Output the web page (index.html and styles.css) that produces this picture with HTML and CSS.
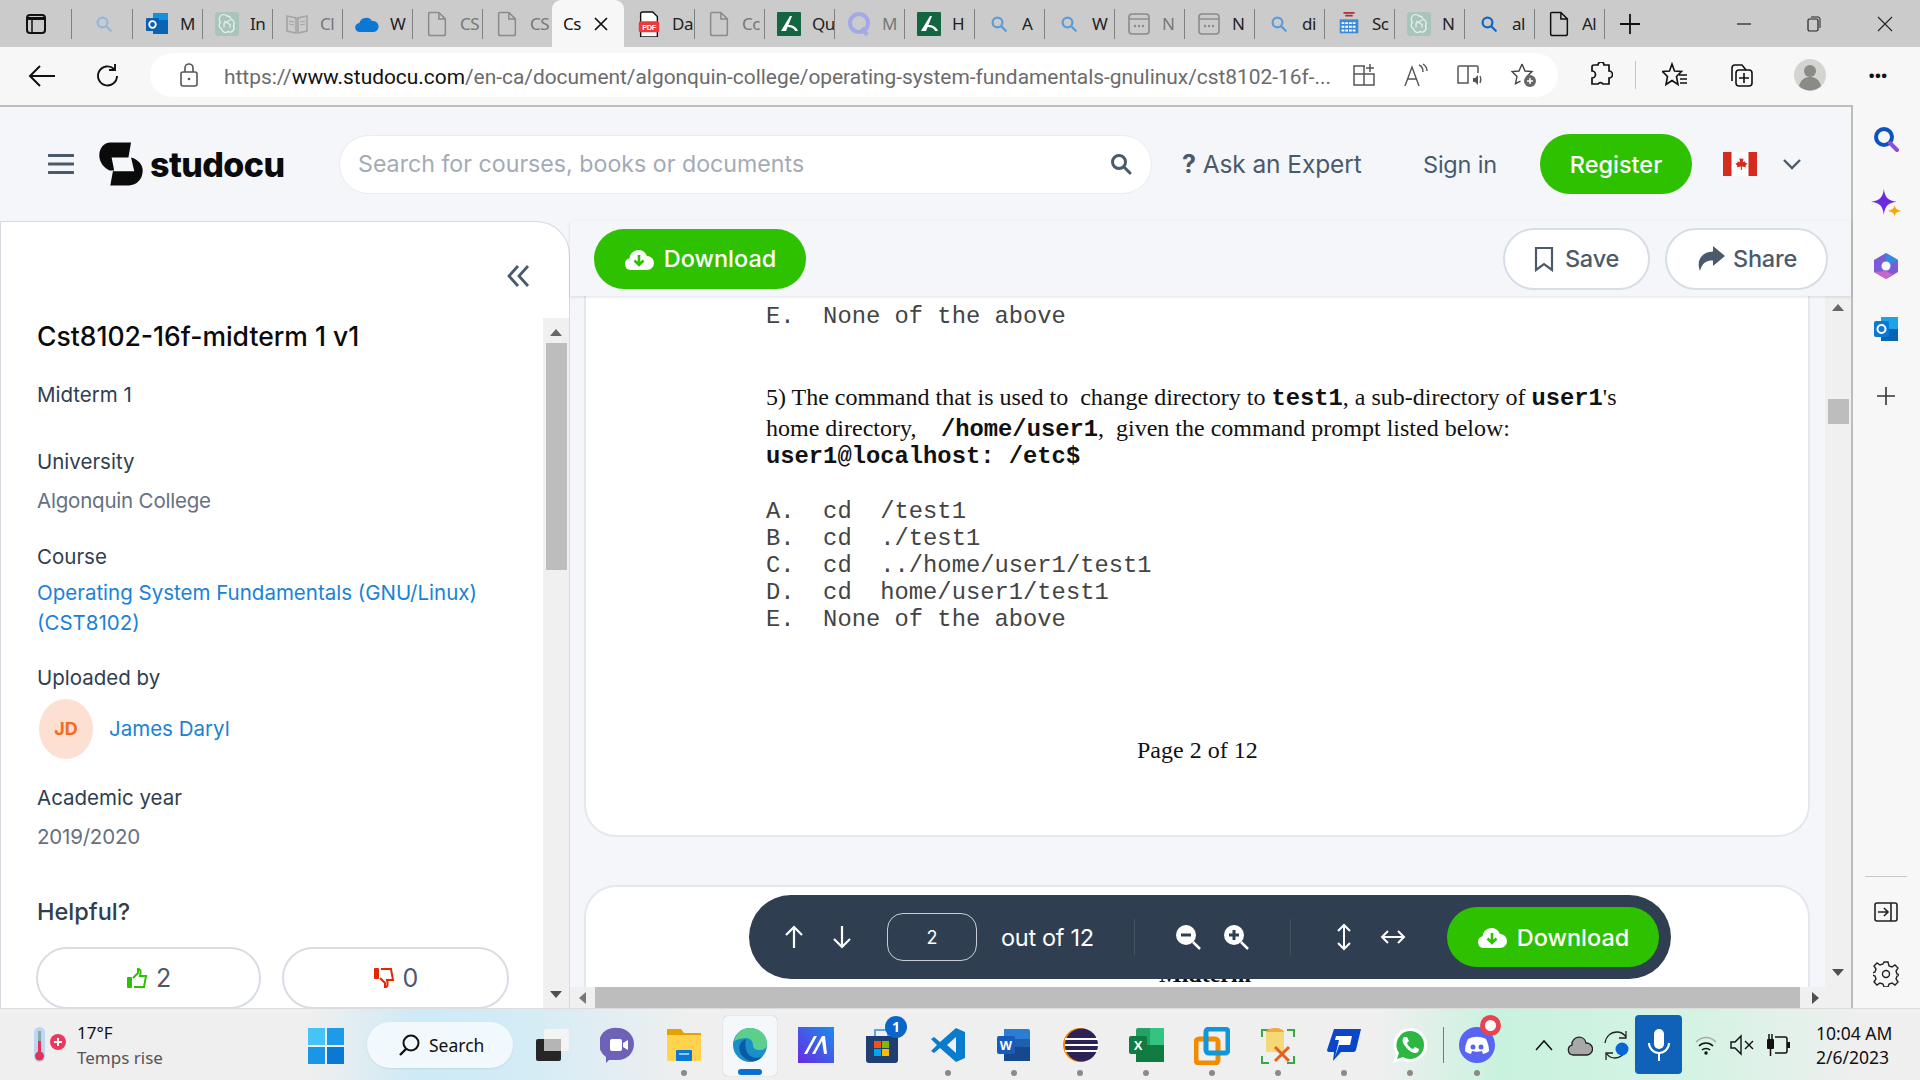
FILE: index.html
```html
<!DOCTYPE html>
<html lang="en">
<head>
  <meta charset="UTF-8">
  <title>Cst8102-16f-midterm 1 v1 - Studocu</title>
  <link rel="stylesheet" href="styles.css">
</head>
<body>
<svg class="defs" width="0" height="0">
  <symbol id="i-search" viewBox="0 0 24 24"><circle cx="10" cy="10" r="6.5" fill="none" stroke="currentColor" stroke-width="3"/><path d="M15 15l6 6" stroke="currentColor" stroke-width="3" stroke-linecap="round"/></symbol>
  <symbol id="i-doc" viewBox="0 0 24 28"><path d="M4 1.5h10l7 7v16a2 2 0 0 1-2 2H5a2 2 0 0 1-2-2v-22a1 1 0 0 1 1-1z M14 1.5v7h7" fill="none" stroke="currentColor" stroke-width="1.6"/></symbol>
  <symbol id="i-dots" viewBox="0 0 24 24"><rect x="2" y="2" width="20" height="20" rx="3" fill="none" stroke="currentColor" stroke-width="1.6"/><path d="M2 7h20" stroke="currentColor" stroke-width="1.4"/><circle cx="8" cy="14" r="1.2" fill="currentColor"/><circle cx="12" cy="14" r="1.2" fill="currentColor"/><circle cx="16" cy="14" r="1.2" fill="currentColor"/></symbol>
  <symbol id="i-gpt" viewBox="0 0 24 24"><rect width="24" height="24" rx="3" fill="#a9c4bb"/><path d="M12 4a4 4 0 0 1 4 3.4 4 4 0 0 1 2.4 6.4A4 4 0 0 1 13 19.4a4 4 0 0 1-6.6-2.6 4 4 0 0 1-1-6.5A4 4 0 0 1 12 4zM9 9l6 3.500v3M15 8l-6 3.500v4" fill="none" stroke="#e8f0ed" stroke-width="1.300"/></symbol>
  <symbol id="i-ak" viewBox="0 0 24 24"><rect width="24" height="24" rx="1" fill="#126640"/><path d="M4 19L13 4h2L9 19zM11 13c4 0 8 1 10 6h-3c-1-3-4-4-8-4z" fill="#fff"/></symbol>
  <symbol id="i-cloud" viewBox="0 0 30 24"><path d="M7 23a6 6 0 0 1-1.500-11.800A9 9 0 0 1 23 9a7 7 0 0 1 0 14z" fill="#fff"/><path d="M15 8v10M10.500 13.500L15 18l4.500-4.500" fill="none" stroke="#2dc100" stroke-width="2.600"/></symbol>
</svg>

<div class="tabstrip">
  <div class="tab-panel"><svg width="24" height="24" viewBox="0 0 24 24"><rect x="3" y="3" width="18" height="18" rx="3" fill="none" stroke="#111" stroke-width="2"/><path d="M3 5h18v3H3z" fill="#111"/><path d="M8 8v13" stroke="#111" stroke-width="1.500"/></svg></div>
  <div class="tab tab-first"><svg class="fav fav-s blue-l"><use href="#i-search"/></svg></div>
  <div class="tab"><svg class="fav" viewBox="0 0 24 24"><path d="M8 1h15v21H8z" fill="#1490df"/><path d="M8 8h15v14H8z" fill="#0a64b4"/><rect x="1" y="6" width="13" height="13" rx="1" fill="#0d5fb0"/><circle cx="7.500" cy="12.500" r="3.300" fill="none" stroke="#fff" stroke-width="1.800"/></svg><span>M</span></div>
  <div class="tab"><svg class="fav"><use href="#i-gpt"/></svg><span>In</span></div>
  <div class="tab"><svg class="fav" viewBox="0 0 24 24"><path d="M2 4l9 2v15l-9-2zM22 4l-9 2v15l9-2z" fill="none" stroke="#a4a4a4" stroke-width="1.600"/><path d="M4 9l5 1M4 12l5 1M15 10l5-1M15 13l5-1" stroke="#a4a4a4"/></svg><span class="dim">Cl</span></div>
  <div class="tab"><svg class="fav" viewBox="0 0 24 24"><path d="M5 20a4.500 4.500 0 0 1-.6-9A7 7 0 0 1 17 9a5.500 5.500 0 0 1 2 11z" fill="#0a78d4"/></svg><span>W</span></div>
  <div class="tab"><svg class="fav gray"><use href="#i-doc"/></svg><span class="dim">CS</span></div>
  <div class="tab"><svg class="fav gray"><use href="#i-doc"/></svg><span class="dim">CS</span></div>
  <div class="tab tab-active"><span>Cs</span><svg class="tab-x" viewBox="0 0 14 14"><path d="M1 1l12 12M13 1L1 13" stroke="#111" stroke-width="1.700"/></svg></div>
  <div class="tab tab-after"><svg class="fav" viewBox="0 0 24 28"><path d="M5 1h11l5 5v22H3V3a2 2 0 0 1 2-2z" fill="#fff" stroke="#111" stroke-width="1.500"/><rect x="1" y="11" width="22" height="12" rx="2" fill="#ec3a3a"/><text x="12" y="20.500" class="pdf-text">PDF</text></svg><span>Da</span></div>
  <div class="tab"><svg class="fav gray"><use href="#i-doc"/></svg><span class="dim">Cc</span></div>
  <div class="tab"><svg class="fav"><use href="#i-ak"/></svg><span>Qu</span></div>
  <div class="tab"><svg class="fav" viewBox="0 0 24 24"><circle cx="12" cy="11" r="9" fill="none" stroke="#a3a8e8" stroke-width="4"/><path d="M15 16l5 7" stroke="#a3a8e8" stroke-width="4"/></svg><span class="dim">M</span></div>
  <div class="tab"><svg class="fav"><use href="#i-ak"/></svg><span>H</span></div>
  <div class="tab"><svg class="fav fav-s blue-m"><use href="#i-search"/></svg><span>A</span></div>
  <div class="tab"><svg class="fav fav-s blue-m"><use href="#i-search"/></svg><span>W</span></div>
  <div class="tab"><svg class="fav gray"><use href="#i-dots"/></svg><span class="dim">N</span></div>
  <div class="tab"><svg class="fav gray"><use href="#i-dots"/></svg><span>N</span></div>
  <div class="tab"><svg class="fav fav-s blue-m"><use href="#i-search"/></svg><span>di</span></div>
  <div class="tab"><svg class="fav" viewBox="0 0 24 28"><path d="M6 2h12M8 5h8" stroke="#a33" stroke-width="2"/><rect x="2" y="9" width="20" height="15" fill="#3b8ad9"/><path d="M4 13h16M4 17h16M4 21h16" stroke="#fff" stroke-width="2" stroke-dasharray="3 1"/></svg><span>Sc</span></div>
  <div class="tab"><svg class="fav"><use href="#i-gpt"/></svg><span>N</span></div>
  <div class="tab"><svg class="fav fav-s blue-d"><use href="#i-search"/></svg><span>al</span></div>
  <div class="tab"><svg class="fav black"><use href="#i-doc"/></svg><span>Al</span></div>
  <div class="tab-add"><svg width="22" height="22" viewBox="0 0 22 22"><path d="M11 1v20M1 11h20" stroke="#111" stroke-width="1.800"/></svg></div>
  <div class="win-btns">
    <svg width="14" height="14" viewBox="0 0 14 14"><path d="M0 7h14" stroke="#222" stroke-width="1.200"/></svg>
    <svg width="16" height="16" viewBox="0 0 16 16"><rect x="2" y="3" width="10" height="12" rx="1.500" fill="none" stroke="#222" stroke-width="1.200"/><path d="M5 1h7a2 2 0 0 1 2 2v9" fill="none" stroke="#222"/></svg>
    <svg width="16" height="16" viewBox="0 0 16 16"><path d="M1 1l14 14M15 1L1 15" stroke="#222" stroke-width="1.100"/></svg>
  </div>
</div>

<div class="addressbar">
  <svg class="nav-ic" width="28" height="24" viewBox="0 0 28 24"><path d="M27 12H2M12 2L2 12l10 10" fill="none" stroke="#111" stroke-width="2"/></svg>
  <svg class="nav-ic" width="26" height="26" viewBox="0 0 26 26"><path d="M22 13a9.500 9.500 0 1 1-3-7M20 1v6h-6" fill="none" stroke="#111" stroke-width="1.900"/></svg>
  <div class="urlpill">
    <svg width="20" height="24" viewBox="0 0 20 24"><rect x="2" y="9" width="16" height="14" rx="2" fill="none" stroke="#555" stroke-width="1.600"/><path d="M6 9V5a4 4 0 0 1 8 0v4" fill="none" stroke="#555" stroke-width="1.600"/><circle cx="10" cy="16" r="1.300" fill="#555"/></svg>
    <div class="url">https://<b>www.studocu.com</b>/en-ca/document/algonquin-college/operating-system-fundamentals-gnulinux/cst8102-16f-...</div>
    <div class="url-icons">
      <svg width="24" height="24" viewBox="0 0 24 24"><path d="M13 3H2v19h20V11H2M12 3v19M18 1v8M14 5h8" fill="none" stroke="#555" stroke-width="1.500"/></svg>
      <svg width="26" height="24" viewBox="0 0 26 24"><path d="M2 23L9 4l7 19M5 16h9M16 2c3 1 4 4 4 7M20 1c3 2 4 4 4 7" fill="none" stroke="#555" stroke-width="1.400"/></svg>
      <svg width="28" height="24" viewBox="0 0 28 24"><path d="M12 3H3a1 1 0 0 0-1 1v16h10zM12 3h9a1 1 0 0 1 1 1v6M12 20V3" fill="none" stroke="#555" stroke-width="1.500"/><path d="M17 15h2l3-3v10l-3-3h-2z" fill="#555"/><path d="M24 13c1 2 1 5 0 7" fill="none" stroke="#555" stroke-width="1.200"/></svg>
      <svg width="26" height="26" viewBox="0 0 26 26"><path d="M11 2l3 7 7 .6-5 5 .8 4.400M11 2L8 9l-7 .6 5 5-1.500 7 5-2.500" fill="none" stroke="#444" stroke-width="1.400"/><circle cx="19" cy="19" r="6" fill="#666"/><path d="M19 16v6M16 19h6" stroke="#fff" stroke-width="1.500"/></svg>
    </div>
  </div>
  <div class="browser-tools">
    <svg width="24" height="26" viewBox="0 0 24 26"><path d="M9 3a3 3 0 0 1 6 0h5v6a3 3 0 0 1 0 7v6h-6a3 3 0 0 0-5 0H3v-6a3 3 0 0 0 0-7V5a2 2 0 0 1 2-2z" fill="none" stroke="#111" stroke-width="1.700"/></svg>
    <i class="tool-sep"></i>
    <svg width="26" height="26" viewBox="0 0 26 26"><path d="M10 2l2.500 7 7 .5-5 5 1.500 8-6-4-6 4 1.500-8-5-5 7-.5zM17 13h8M18 17h7M18 21h7" fill="none" stroke="#111" stroke-width="1.600"/></svg>
    <svg width="26" height="26" viewBox="0 0 26 26"><path d="M4 19V6a3 3 0 0 1 3-3h7l4 5" fill="none" stroke="#111" stroke-width="1.600"/><rect x="8" y="8" width="16" height="16" rx="3" fill="none" stroke="#111" stroke-width="1.600"/><path d="M16 11v10M11 16h10" stroke="#111" stroke-width="1.600"/></svg>
    <svg class="profile" width="32" height="32" viewBox="0 0 32 32"><circle cx="16" cy="16" r="16" fill="#d4d4d0"/><circle cx="16" cy="12" r="6" fill="#8a8a86"/><path d="M5 27c2-7 6-9 11-9s9 2 11 9a16 16 0 0 1-22 0z" fill="#8a8a86"/></svg>
    <div class="dots3">···</div>
  </div>
</div>

<div class="browser-main">
  <div class="page">
    <header class="site-head">
      <svg class="burger" width="26" height="22" viewBox="0 0 26 22"><path d="M1 2.500h24M1 11h24M1 19.500h24" stroke="#4b5a6a" stroke-width="3.200" stroke-linecap="round"/></svg>
      <svg class="logo-mark" width="46" height="46" viewBox="20 18 142 140"><path d="M58 22h64l-8 46H62l8 40H56C36 100 24 80 24 62c0-22 14-40 34-40zM122 68c22 6 36 22 36 40 0 26-18 46-43 46H58l8-44h66z" fill="#0b0b0b"/></svg>
      <div class="logo-word">studocu</div>
      <div class="search">
        <span class="search-ph">Search for courses, books or documents</span>
        <svg class="search-ic" width="24" height="24"><use href="#i-search"/></svg>
      </div>
      <div class="ask"><b>?</b> Ask an Expert</div>
      <div class="signin">Sign in</div>
      <div class="btn-green register">Register</div>
      <svg class="flag" width="34" height="24" viewBox="0 0 34 24"><rect width="34" height="24" fill="#fff"/><rect width="8.500" height="24" fill="#d52b1e"/><rect x="25.500" width="8.500" height="24" fill="#d52b1e"/><path d="M17 4l1.500 3 2-.8-.7 4 2.200-1 .5 1.800 2 .2-2 2.500.4 1.500-4-.6V18h-1v-3.400l-4 .6.400-1.500-2-2.500 2-.2.500-1.800 2.200 1-.7-4 2 .8z" fill="#d52b1e"/></svg>
      <svg class="chev" width="20" height="12" viewBox="0 0 20 12"><path d="M2 2l8 8 8-8" fill="none" stroke="#4b5a6a" stroke-width="2.400"/></svg>
    </header>

    <div class="body-row">
      <aside class="info">
        <div class="info-top">
          <svg width="24" height="24" viewBox="0 0 24 24"><path d="M11 2L2 12l9 10M21 2l-9 10 9 10" fill="none" stroke="#4b5a6a" stroke-width="2.800"/></svg>
        </div>
        <div class="info-row">
          <div class="info-scroll">
            <h1 class="doc-title">Cst8102-16f-midterm 1 v1</h1>
            <div class="lbl m-a">Midterm 1</div>
            <div class="lbl m-b">University</div>
            <div class="val m-c">Algonquin College</div>
            <div class="lbl m-d">Course</div>
            <div class="link m-e">Operating System Fundamentals (GNU/Linux)<br>(CST8102)</div>
            <div class="lbl m-f">Uploaded by</div>
            <div class="uploader">
              <div class="avatar">JD</div>
              <div class="link">James Daryl</div>
            </div>
            <div class="lbl m-g">Academic year</div>
            <div class="val m-c">2019/2020</div>
            <div class="helpful">Helpful?</div>
            <div class="votes">
              <div class="vote vote-up">
                <svg width="22" height="22" viewBox="0 0 22 22"><rect x="1" y="10" width="5" height="11" rx="1" fill="#2dc100"/><path d="M7 11l5-5V2c3 0 3 3 2 7h6l-2 11H8" fill="none" stroke="#2dc100" stroke-width="2"/></svg>
                <span>2</span>
              </div>
              <div class="vote vote-down">
                <svg width="22" height="22" viewBox="0 0 22 22"><rect x="1" y="1" width="5" height="11" rx="1" fill="#e52600"/><path d="M7 11l5 5v4c3 0 3-3 2-7h6L18 2H8" fill="none" stroke="#e52600" stroke-width="2"/></svg>
                <span>0</span>
              </div>
            </div>
          </div>
          <div class="vbar vbar-info">
            <i class="arr-up"></i>
            <div class="thumb"></div>
            <i class="arr-down"></i>
          </div>
        </div>
      </aside>

      <section class="viewer">
        <div class="actions">
          <div class="btn-green dl-top"><svg width="30" height="24"><use href="#i-cloud"/></svg>Download</div>
          <div class="action-right">
            <div class="btn-line"><svg width="20" height="26" viewBox="0 0 20 26"><path d="M2 2h16v22l-8-6-8 6z" fill="none" stroke="#4b5a6a" stroke-width="2.200"/></svg>Save</div>
            <div class="btn-line btn-share"><svg width="30" height="26" viewBox="0 0 30 26"><path d="M17 0l12 10-12 10v-5.500C10 14.500 6 17 4 25 0 15 5 6 17 5.500z" fill="#4b5a6a"/></svg>Share</div>
          </div>
        </div>

        <div class="doc-view">
          <div class="doc-row">
            <div class="doc-scroll">
              <div class="doc-page">
                <div class="mono">E.  None of the above</div>
                <p class="q q-top">5) The command that is used to  change directory to <b class="mono-b">test1</b>, a sub-directory of <b class="mono-b">user1</b>'s</p>
                <p class="q q-two">home directory,<span class="mono-b q-gap">  </span><b class="mono-b">/home/user1</b>,  given the command prompt listed below:</p>
                <div class="mono mono-strong">user1@localhost: /etc$</div>
                <div class="answers">
                  <div class="mono">A.  cd  /test1</div>
                  <div class="mono">B.  cd  ./test1</div>
                  <div class="mono">C.  cd  ../home/user1/test1</div>
                  <div class="mono">D.  cd  home/user1/test1</div>
                  <div class="mono">E.  None of the above</div>
                </div>
                <div class="pageno">Page 2 of 12</div>
              </div>
              <div class="doc-page doc-page-next">
                <div class="next-head">Midterm</div>
              </div>
            </div>
            <div class="vbar vbar-doc">
              <i class="arr-up"></i>
              <div class="thumb"></div>
              <i class="arr-down"></i>
            </div>
          </div>
          <div class="hbar">
            <i class="arr-left"></i>
            <div class="hthumb"></div>
            <i class="arr-right"></i>
          </div>

          <div class="floatbar">
            <svg width="20" height="24" viewBox="0 0 20 24"><path d="M10 23V2M2 10l8-8 8 8" fill="none" stroke="#fff" stroke-width="2.200"/></svg>
            <svg class="fb-next" width="20" height="24" viewBox="0 0 20 24"><path d="M10 1v21M2 14l8 8 8-8" fill="none" stroke="#fff" stroke-width="2.200"/></svg>
            <div class="page-input">2</div>
            <div class="out-of">out of 12</div>
            <i class="fb-sep"></i>
            <svg class="fb-zoom-a" width="26" height="26" viewBox="0 0 26 26"><circle cx="11" cy="11" r="10" fill="#fff"/><path d="M6 11h10" stroke="#2f3e50" stroke-width="3"/><path d="M18 18l7 7" stroke="#fff" stroke-width="2.500"/></svg>
            <svg class="fb-zoom-b" width="26" height="26" viewBox="0 0 26 26"><circle cx="11" cy="11" r="10" fill="#fff"/><path d="M6 11h10M11 6v10" stroke="#2f3e50" stroke-width="3"/><path d="M18 18l7 7" stroke="#fff" stroke-width="2.500"/></svg>
            <i class="fb-sep fb-sep-2"></i>
            <svg class="fb-v" width="16" height="28" viewBox="0 0 16 28"><path d="M8 2v24M2 8l6-6 6 6M2 20l6 6 6-6" fill="none" stroke="#fff" stroke-width="2"/></svg>
            <svg class="fb-h" width="26" height="16" viewBox="0 0 26 16"><path d="M2 8h22M8 2L2 8l6 6M18 2l6 6-6 6" fill="none" stroke="#fff" stroke-width="2"/></svg>
            <div class="btn-green dl-bar"><svg width="30" height="24"><use href="#i-cloud"/></svg>Download</div>
          </div>
        </div>
      </section>
    </div>
  </div>

  <nav class="rail">
    <svg class="rail-top" width="26" height="26" viewBox="0 0 26 26"><circle cx="11" cy="11" r="8" fill="none" stroke="#0b53c1" stroke-width="4"/><path d="M17 17l7 7" stroke="#8b4fd8" stroke-width="4" stroke-linecap="round"/></svg>
    <svg class="rail-spark" width="28" height="28" viewBox="0 0 28 28"><path d="M12 0c1 8 4 11 12 12-8 1-11 4-12 12-1-8-4-11-12-12 8-1 11-4 12-12z" fill="#6a2be0"/><path d="M22 15c.5 3 1.500 4 6 5.500-4.500 1-5.500 2-6 5.500-.5-3.500-1.500-4.500-6-5.500 4.500-1.500 5.500-2.500 6-5.500z" fill="#f4a70a"/></svg>
    <svg width="26" height="28" viewBox="0 0 26 28"><path d="M13 1l12 7v12l-12 7-12-7V8z" fill="#7c5bd6"/><path d="M13 1l12 7-7 4-5-3z" fill="#2f8fdc"/><path d="M1 20l12 7 7-4-7-4z" fill="#c768c9"/><circle cx="13" cy="14" r="4.500" fill="#f7f7f7"/></svg>
    <svg width="26" height="26" viewBox="0 0 26 26"><path d="M8 1h17v24H8z" fill="#1ca2e6"/><path d="M8 13l17 0v12H8z" fill="#0a64b4"/><rect x="1" y="5" width="15" height="16" rx="2" fill="#0a78d4"/><circle cx="8.500" cy="13" r="4" fill="none" stroke="#fff" stroke-width="2"/></svg>
    <svg class="rail-plus" width="20" height="20" viewBox="0 0 20 20"><path d="M10 1v18M1 10h18" stroke="#333" stroke-width="1.600"/></svg>
    <div class="rail-bottom">
      <i class="rail-line"></i>
      <svg width="24" height="20" viewBox="0 0 24 20"><rect x="1" y="1" width="22" height="18" rx="2" fill="none" stroke="#222" stroke-width="1.600"/><path d="M17 1v18M4 10h9M10 6l4 4-4 4" fill="none" stroke="#222" stroke-width="1.600"/></svg>
      <svg class="gear" width="26" height="26" viewBox="0 0 26 26"><path d="M11 1h4l1 4 3 1 3-2 3 3-2 3 1 3 3 1v0l-3 1-1 3 2 3-3 3-3-2-3 1-1 3h-4l-1-3-3-1-3 2-3-3 2-3-1-3-3-1v-2l3-1 1-3-2-3 3-3 3 2 3-1z" fill="none" stroke="#222" stroke-width="1.400"/><circle cx="13" cy="13" r="3.500" fill="none" stroke="#222" stroke-width="1.400"/></svg>
    </div>
  </nav>
</div>

<footer class="taskbar">
  <div class="weather">
    <svg width="36" height="36" viewBox="0 0 36 36"><rect x="3" y="0" width="11" height="35" rx="5.500" fill="#bcd8f0"/><rect x="7" y="4" width="3" height="24" fill="#8aa"/><rect x="7" y="14" width="3" height="16" fill="#e0325a"/><circle cx="8.500" cy="29" r="4.500" fill="#e0325a"/><circle cx="27" cy="15" r="8" fill="#e8395f"/><path d="M27 11v8M23 15h8" stroke="#fff" stroke-width="2"/></svg>
    <div class="weather-text">
      <div>17°F</div>
      <div class="weather-sub">Temps rise</div>
    </div>
  </div>
  <svg class="winlogo" width="36" height="36" viewBox="0 0 36 36"><rect width="17" height="17" fill="#45c4f9"/><rect x="19" width="17" height="17" fill="#1c9be8"/><rect y="19" width="17" height="17" fill="#1a96e4"/><rect x="19" y="19" width="17" height="17" fill="#0a78d4"/></svg>
  <div class="tb-search">
    <svg width="24" height="24" viewBox="0 0 24 24"><circle cx="14" cy="10" r="7.500" fill="none" stroke="#111" stroke-width="2"/><path d="M9 16l-6 6" stroke="#111" stroke-width="2.400"/></svg>
    Search
  </div>
  <div class="tb-icons">
    <div class="tb-icon"><svg width="36" height="36" viewBox="0 0 36 36"><rect x="2" y="12" width="25" height="22" rx="2" fill="#262626"/><rect x="10" y="2" width="25" height="22" rx="2" fill="#f4f4f4"/><rect x="10" y="12" width="17" height="12" fill="#b5b5b5"/></svg></div>
    <div class="tb-icon"><svg width="36" height="36" viewBox="0 0 36 36"><path d="M18 1a16 16 0 0 1 16 16c0 9-7 16-16 16h-9l-3 3v-6A16 16 0 0 1 18 1z" fill="#6e62b8"/><rect x="10" y="12" width="12" height="12" rx="2" fill="#fff"/><path d="M23 16l5-3v10l-5-3z" fill="#fff"/></svg></div>
    <div class="tb-icon has-dot"><svg width="36" height="36" viewBox="0 0 36 36"><path d="M1 2h14l3 4h17v6H1z" fill="#e5a100"/><rect x="1" y="8" width="34" height="26" rx="1" fill="#ffd34d"/><rect x="10" y="23" width="16" height="11" rx="1" fill="#0a78d4"/><path d="M13 27h10" stroke="#bfe3f8" stroke-width="1.500"/></svg><i></i></div>
    <div class="tb-icon tb-active"><svg width="36" height="36" viewBox="0 0 36 36"><circle cx="18" cy="18" r="17" fill="#1a8fc9"/><path d="M2 14C5 5 11 1 18 1c9 0 17 6 17 16 0 4-3 6-7 6-5 0-7-2-7-5 0-4-3-7-7-7-6 0-11 3-12 3z" fill="#5cd08b"/><path d="M14 12c-6 2-8 8-6 13 2 6 9 10 15 9 3-1 5-2 7-4-6 2-13 0-15-5-2-4-2-9-1-13z" fill="#0c5aa6"/></svg><i></i></div>
    <div class="tb-icon"><svg width="36" height="36" viewBox="0 0 36 36"><defs><linearGradient id="g-maple" x1="0" y1="1" x2="1" y2="0"><stop offset="0" stop-color="#6a2be0"/><stop offset="1" stop-color="#1a8cf0"/></linearGradient></defs><rect width="36" height="36" fill="url(#g-maple)"/><path d="M6 27L16 9h3L9 27zM14 27L24 9h3l2 18h-3l-2-13-7 13z" fill="#fff"/></svg></div>
    <div class="tb-icon"><svg width="36" height="38" viewBox="0 0 36 38"><path d="M2 9h32v24a3 3 0 0 1-3 3H5a3 3 0 0 1-3-3z" fill="#1f3f73"/><path d="M11 9V3h13v6" fill="none" stroke="#5aa7e0" stroke-width="2"/><rect x="10" y="14" width="7" height="7" fill="#f25022"/><rect x="18" y="14" width="7" height="7" fill="#7fba00"/><rect x="10" y="22" width="7" height="7" fill="#00a4ef"/><rect x="18" y="22" width="7" height="7" fill="#ffb900"/></svg><span class="badge">1</span></div>
    <div class="tb-icon has-dot"><svg width="36" height="36" viewBox="0 0 36 36"><path d="M26 1l9 4v26l-9 4L10 21l-6 5-3-2 6-6-6-6 3-2 6 5z" fill="#0a7ccc"/><path d="M26 10v16l-9-8z" fill="#f0f0f0"/></svg><i></i></div>
    <div class="tb-icon has-dot"><svg width="36" height="36" viewBox="0 0 36 36"><path d="M8 2h24a2 2 0 0 1 2 2v28a2 2 0 0 1-2 2H8z" fill="#2b7cd3"/><path d="M8 12h26v8H8z" fill="#1e5fb0"/><path d="M8 20h26v14H8z" fill="#15488c"/><rect x="1" y="9" width="18" height="18" rx="2" fill="#185abd"/><text x="10" y="23" class="app-letter">W</text></svg><i></i></div>
    <div class="tb-icon has-dot"><svg width="36" height="36" viewBox="0 0 36 36"><circle cx="18" cy="18" r="17" fill="#f08a00"/><circle cx="19.500" cy="18" r="16.500" fill="#2c2255"/><path d="M3 12h33M3 18h33M3 24h33" stroke="#fff" stroke-width="2.200"/></svg><i></i></div>
    <div class="tb-icon has-dot"><svg width="36" height="36" viewBox="0 0 36 36"><rect x="8" y="1" width="28" height="34" rx="2" fill="#21a366"/><path d="M22 1h14v17H22z" fill="#33c481"/><path d="M8 18h28v17H8z" fill="#107c41"/><rect x="1" y="9" width="18" height="18" rx="2" fill="#107c41"/><text x="10" y="23" class="app-letter">X</text></svg><i></i></div>
    <div class="tb-icon has-dot"><svg width="36" height="38" viewBox="0 0 36 38"><rect x="2" y="12" width="22" height="24" rx="3" fill="none" stroke="#f08c00" stroke-width="5"/><rect x="12" y="2" width="22" height="24" rx="3" fill="none" stroke="#1296d5" stroke-width="5"/></svg><i></i></div>
    <div class="tb-icon has-dot"><svg width="36" height="38" viewBox="0 0 36 38"><path d="M2 10V3h7M27 3h7v7M2 29v7h7M27 36h7v-7" fill="none" stroke="#3aa84a" stroke-width="2"/><ellipse cx="15" cy="5" rx="9" ry="4" fill="#f0a93a"/><path d="M6 5h18v20H6z" fill="#f5d976"/><path d="M15 20l14 14M29 20L15 34" stroke="#e2621b" stroke-width="3"/></svg><i></i></div>
    <div class="tb-icon has-dot"><svg width="36" height="36" viewBox="0 0 36 36"><path d="M8 2h27l-5 21a3 3 0 0 1-3 2H15l-8 9 1-9H3a2 2 0 0 1-2-2z" fill="#0a46c9"/><path d="M10 9h16l-2 9H13l-4 12 4-17H9z" fill="#fff"/></svg><i></i></div>
    <div class="tb-icon has-dot"><svg width="36" height="36" viewBox="0 0 36 36"><path d="M18 1a17 17 0 0 1 0 34c-3 0-6-1-8-2l-9 3 3-9a17 17 0 0 1 14-26z" fill="#fff"/><path d="M18 4a14 14 0 0 1 0 28c-3 0-5-1-7-2l-6 2 2-6a14 14 0 0 1 11-22z" fill="#2bb741"/><path d="M12 10c-2 2-2 5 1 9s7 7 10 7 4-2 4-4l-4-2-2 2c-3-1-5-3-6-6l2-2-2-4z" fill="#fff"/></svg><i></i></div>
  </div>
  <i class="tb-sep"></i>
  <div class="tb-icon has-dot tb-discord"><svg width="36" height="36" viewBox="0 0 36 36"><circle cx="18" cy="18" r="18" fill="#5865f2"/><path d="M9 12c6-3 12-3 18 0 2 4 3 8 3 12-2 2-4 2-6 3l-1-3c-3 1-7 1-10 0l-1 3c-2-1-4-1-6-3 0-4 1-8 3-12z" fill="#fff"/><circle cx="14" cy="20" r="2.500" fill="#5865f2"/><circle cx="22" cy="20" r="2.500" fill="#5865f2"/></svg><span class="rec"></span><i></i></div>
  <div class="tray">
    <div class="tray-cell"><svg width="20" height="12" viewBox="0 0 20 12"><path d="M2 11l8-9 8 9" fill="none" stroke="#111" stroke-width="1.500"/></svg></div>
    <div class="tray-cell"><svg width="26" height="22" viewBox="0 0 26 22"><path d="M6 21a5 5 0 0 1-1-9.800 7 7 0 0 1 7-8 7 7 0 0 1 7 5.800 5.500 5.500 0 0 1 1 12z" fill="#a8a8a8" stroke="#222" stroke-width="1.300"/></svg></div>
    <div class="tray-cell"><svg width="26" height="32" viewBox="0 0 26 32"><path d="M2 14C3 7 8 3 14 3c4 0 7 2 9 5M23 2v7h-7M23 20c-2 6-6 9-11 9-3 0-6-1-8-4M3 31v-7h7" fill="none" stroke="#222" stroke-width="1.300"/><circle cx="19" cy="20" r="6.500" fill="#0a66d4"/></svg></div>
    <div class="tray-mic"><svg width="24" height="34" viewBox="0 0 24 34"><rect x="7" y="1" width="10" height="20" rx="5" fill="#fff"/><path d="M2 15a10 10 0 0 0 20 0M12 25v8" fill="none" stroke="#fff" stroke-width="2"/></svg></div>
    <div class="tray-cell"><svg width="24" height="24" viewBox="0 0 24 24"><path d="M2 9c6-6 14-6 20 0" fill="none" stroke="#aaa" stroke-width="1.500"/><path d="M5 13c4-4 10-4 14 0M8 17c2-2 6-2 8 0" fill="none" stroke="#111" stroke-width="1.600"/><circle cx="12" cy="20" r="1.700" fill="#111"/></svg></div>
    <div class="tray-cell"><svg width="24" height="22" viewBox="0 0 24 22"><path d="M1 8h4l6-6v18l-6-6H1zM15 7l8 8M23 7l-8 8" fill="none" stroke="#111" stroke-width="1.400"/></svg></div>
    <div class="tray-cell"><svg width="26" height="24" viewBox="0 0 26 24"><path d="M10 4h10a2 2 0 0 1 2 2v12a2 2 0 0 1-2 2H10" fill="none" stroke="#111" stroke-width="1.500"/><rect x="22" y="9" width="3" height="6" fill="#111"/><rect x="2" y="6" width="7" height="10" rx="1" fill="#111"/><path d="M4 1v5M7 1v5M5.500 16v7" stroke="#111" stroke-width="1.500"/></svg></div>
  </div>
  <div class="clock">
    <div>10:04 AM</div>
    <div>2/6/2023</div>
  </div>
</footer>
</body>
</html>
```

FILE: styles.css
```css
* { box-sizing: border-box; }

html, body {
  margin: 0;
  height: 1080px;
  width: 1920px;
  overflow: hidden;
}

body {
  display: flex;
  flex-direction: column;
  font-family: "Noto Sans", sans-serif;
  color: #111;
  background: #f7f7f7;
}

svg { flex: none; display: block; }
.defs { position: absolute; }

/* browser tabs */
.tabstrip {
  height: 47px;
  flex: none;
  display: flex;
  align-items: center;
  background: #cbcbcb;
}
.tab-panel {
  width: 71px;
  display: flex;
  justify-content: center;
}
.tab {
  width: 70px;
  height: 30px;
  display: flex;
  align-items: center;
  gap: 11px;
  padding-left: 12px;
  border-left: 1px solid #808080;
  overflow: hidden;
  font-size: 17px;
  letter-spacing: -.5px;
  white-space: nowrap;
  color: #222;
}
.tab-first { width: 61px; padding-left: 20px; }
.tab-active {
  width: 72px;
  height: 47px;
  padding-left: 11px;
  gap: 13px;
  border: 0;
  border-radius: 9px 9px 0 0;
  background: #f7f7f7;
  color: #111;
}
.tab-after { border-left: 0; padding-left: 13px; }
.tab-x { width: 14px; height: 14px; }
.fav { width: 24px; height: 26px; }
.fav-s { width: 18px; height: 18px; margin: 0 3px; }
.dim { color: #777; }
.gray { color: #8a8a8a; }
.black { color: #111; }
.blue-l { color: #8fb8dd; }
.blue-m { color: #5c9cd6; }
.blue-d { color: #1268c4; }
.pdf-text { font: bold 8px "Liberation Sans", sans-serif; fill: #fff; text-anchor: middle; }
.tab-add {
  width: 50px;
  display: flex;
  justify-content: center;
  border-left: 1px solid #808080;
  height: 30px;
  align-items: center;
}
.win-btns {
  margin-left: auto;
  display: flex;
  align-items: center;
  gap: 55px;
  padding-right: 27px;
}

/* address bar */
.addressbar {
  height: 60px;
  flex: none;
  display: flex;
  align-items: center;
  background: #f7f7f7;
  border-bottom: 2px solid #bdbdbd;
  padding-left: 28px;
}
.nav-ic + .nav-ic { margin-left: 39px; }
.urlpill {
  width: 1408px;
  height: 44px;
  margin-left: 29px;
  margin-top: -3px;
  border-radius: 22px;
  background: #fff;
  display: flex;
  align-items: center;
  padding-left: 29px;
}
.url {
  margin-left: 25px;
  width: 1112px;
  padding-top: 4px;
  font-family: Roboto, sans-serif;
  font-size: 20.900px;
  color: #6b6b6b;
  white-space: nowrap;
}
.url b { font-weight: 400; color: #111; }
.url-icons {
  display: flex;
  align-items: center;
  gap: 27px;
  margin-left: 16px;
}
.browser-tools {
  display: flex;
  align-items: center;
  margin-left: 31px;
  margin-top: -3px;
}
.tool-sep { width: 1px; height: 28px; background: #c4c4c4; margin: 0 26px 0 22px; }
.browser-tools svg + svg { margin-left: 40px; }
.dots3 { margin-left: 42px; font-size: 26px; font-weight: 700; line-height: 1; letter-spacing: -1px; }

/* page + edge sidebar */
.browser-main {
  height: 901px;
  flex: none;
  display: flex;
}
.page {
  width: 1851px;
  display: flex;
  flex-direction: column;
  background: #f5f6fa;
  font-family: Inter, sans-serif;
  color: #4b5a6a;
}

.site-head {
  height: 114px;
  flex: none;
  display: flex;
  align-items: center;
  padding-left: 48px;
}
.logo-mark { margin-left: 24px; }
.logo-word {
  margin-left: 6px;
  font-size: 34px;
  font-weight: 800;
  letter-spacing: -.6px;
  color: #0b0b0b;
  width: 189px;
}
.search {
  width: 813px;
  height: 59px;
  border: 1px solid #e8ebf0;
  border-radius: 30px;
  background: #fff;
  display: flex;
  align-items: center;
  padding: 0 18px;
}
.search-ph { font-size: 23.200px; color: #a3abb6; }
.search-ic { margin-left: auto; }
.ask { margin-left: 30px; font-size: 24.500px; width: 241px; white-space: nowrap; letter-spacing: -.1px; }
.ask b { font-size: 25px; }
.signin { font-size: 23.500px; width: 117px; letter-spacing: -.2px; }
.btn-green {
  display: flex;
  align-items: center;
  justify-content: center;
  background: #2dc100;
  color: #fff;
  font-weight: 500;
  border-radius: 32px;
}
.register { width: 152px; height: 60px; font-size: 23.500px; }
.flag { margin-left: 31px; }
.chev { margin-left: 25px; }

.body-row {
  flex: 1;
  display: flex;
  min-height: 0;
}

/* left info panel */
.info {
  width: 570px;
  flex: none;
  display: flex;
  flex-direction: column;
  background: #fff;
  border: 1px solid #d5d9e0;
  border-bottom: 0;
  border-radius: 0 34px 0 0;
}
.info-top {
  height: 96px;
  flex: none;
  display: flex;
  justify-content: flex-end;
  padding: 42px 38px 0 0;
}
.info-row {
  flex: 1;
  display: flex;
  min-height: 0;
}
.info-scroll {
  flex: 1;
  padding-left: 36px;
  overflow: hidden;
  font-size: 20.500px;
  line-height: 30px;
  color: #2f3e50;
}
.doc-title {
  margin: 0;
  font-size: 26.500px;
  line-height: 36px;
  font-weight: 500;
  color: #0b0b0b;
}
.m-a { margin-top: 26px; }
.m-b { margin-top: 37px; }
.m-c { margin-top: 9px; }
.m-d { margin-top: 26px; }
.m-e { margin-top: 6px; }
.m-f { margin-top: 25px; }
.m-g { margin-top: 24px; }
.val { color: #66717e; letter-spacing: -.2px; }
.link { color: #1a82d6; }
.uploader {
  margin: 6px 0 0 2px;
  display: flex;
  align-items: center;
  gap: 16px;
}
.avatar {
  width: 54px;
  height: 60px;
  border-radius: 50%;
  background: #fde0d2;
  color: #f46a1f;
  font-size: 18px;
  font-weight: 700;
  display: flex;
  align-items: center;
  justify-content: center;
}
.helpful {
  margin-top: 43px;
  font-size: 23.500px;
  line-height: 34px;
  font-weight: 500;
}
.votes {
  margin: 18px 0 0 -1px;
  display: flex;
  gap: 21px;
}
.vote {
  width: 225px;
  height: 62px;
  border: 2px solid #d8dde5;
  border-radius: 32px;
  display: flex;
  align-items: center;
  justify-content: center;
  gap: 8px;
  font-size: 25px;
  color: #4b5a6a;
}
.vote-down { width: 227px; }

/* scrollbars */
.vbar {
  width: 26px;
  flex: none;
  background: #f0f0f0;
  display: flex;
  flex-direction: column;
  align-items: center;
}
.vbar .thumb { width: 21px; background: #bdbdbd; }
.arr-up, .arr-down, .arr-left, .arr-right { width: 0; height: 0; border: 6px solid transparent; flex: none; }
.arr-up { border-top: 0; border-bottom: 7px solid #666; }
.arr-down { border-bottom: 0; border-top: 7px solid #505050; margin-top: auto; }
.vbar-info { padding: 11px 0 10px; }
.vbar-info .thumb { height: 227px; margin-top: 7px; }
.vbar-doc { padding: 8px 0 11px; }
.vbar-doc .thumb { height: 25px; margin-top: 88px; }
.hbar {
  height: 21px;
  flex: none;
  display: flex;
  align-items: center;
  padding: 0 32px 0 9px;
  background: #f0f0f0;
}
.arr-left { border-left: 0; border-right: 7px solid #777; }
.arr-right { border-right: 0; border-left: 7px solid #505050; margin-left: auto; }
.hthumb { width: 1205px; height: 21px; margin-left: 9px; background: #bdbdbd; }

/* right column */
.viewer {
  flex: 1;
  min-width: 0;
  display: flex;
  flex-direction: column;
}
.actions {
  height: 75px;
  flex: none;
  display: flex;
  align-items: center;
  padding: 0 23px 0 24px;
  box-shadow: 0 1px 3px rgba(0, 0, 0, .12);
  position: relative;
  z-index: 1;
}
.dl-top { width: 212px; height: 60px; font-size: 23.500px; gap: 10px; }
.action-right { margin-left: auto; display: flex; gap: 15px; }
.btn-line {
  width: 147px;
  height: 62px;
  border: 2px solid #d8dde5;
  border-radius: 32px;
  background: #fff;
  display: flex;
  align-items: center;
  justify-content: center;
  gap: 11px;
  font-size: 23.500px;
  font-weight: 500;
  letter-spacing: -.2px;
}
.btn-share { width: 163px; gap: 7px; }

.doc-view {
  flex: 1;
  min-height: 0;
  position: relative;
  display: flex;
  flex-direction: column;
}
.doc-row {
  flex: 1;
  min-height: 0;
  display: flex;
}
.doc-scroll {
  flex: 1;
  min-width: 0;
  overflow: hidden;
  padding: 0 15px 0 14px;
}
.doc-page {
  height: 541px;
  background: #fff;
  border: 2px solid #e4e7ee;
  border-top: 0;
  border-radius: 0 0 32px 32px;
  padding: 7px 0 0 180px;
  font-family: "Liberation Serif", serif;
  color: #111;
}
.mono {
  font-family: "Liberation Mono", monospace;
  font-size: 23.800px;
  line-height: 27px;
  white-space: pre;
  color: #444;
}
.mono-strong { font-weight: 700; color: #111; margin-top: -2px; }
.q {
  margin: 0;
  font-size: 24px;
  line-height: 30px;
  white-space: pre;
}
.q-top { margin-top: 52px; }
.q-two { margin-top: -1px; }
.q-gap { margin-right: -4px; }
.mono-b { font-family: "Liberation Mono", monospace; font-size: 23.800px; }
.answers { margin-top: 28px; }
.pageno {
  margin: 102px 0 0 371px;
  line-height: 30px;
  font-size: 24px;
}
.doc-page-next {
  height: 200px;
  margin-top: 48px;
  border: 2px solid #e4e7ee;
  border-bottom: 0;
  border-radius: 32px 32px 0 0;
  padding: 72px 0 0 573px;
}
.next-head { font-size: 24px; font-weight: 700; line-height: 30px; }

/* floating toolbar over the page */
.floatbar {
  position: absolute;
  left: 179px;
  top: 599px;
  width: 922px;
  height: 84px;
  border-radius: 42px;
  background: #2f3e50;
  display: flex;
  align-items: center;
  padding-left: 35px;
  color: #fff;
  font-size: 23.500px;
}
.fb-next { margin-left: 28px; }
.page-input {
  width: 90px;
  height: 48px;
  margin-left: 35px;
  border: 1px solid #c8cdd3;
  border-radius: 16px;
  display: flex;
  align-items: center;
  justify-content: center;
  font-size: 18px;
}
.out-of { margin-left: 24px; width: 93px; white-space: nowrap; letter-spacing: -.3px; }
.fb-sep { width: 1px; height: 36px; background: #45525f; margin-left: 40px; }
.fb-zoom-a { margin-left: 40px; }
.fb-zoom-b { margin-left: 22px; }
.fb-sep-2 { margin-left: 41px; }
.fb-v { margin-left: 45px; }
.fb-h { margin-left: 28px; }
.dl-bar { width: 212px; height: 60px; margin-left: 41px; font-size: 23.500px; gap: 10px; }

/* edge sidebar */
.rail {
  flex: 1;
  border-left: 2px solid #bdbdbd;
  margin-top: -2px;
  background: #f7f7f7;
  display: flex;
  flex-direction: column;
  align-items: center;
  gap: 36px;
  padding: 21px 2px 0 0;
}
.rail-spark { margin: 1px 0 -3px; width: 30px; height: 30px; }
.rail-plus { margin-top: 8px; }
.rail-bottom {
  margin-top: auto;
  display: flex;
  flex-direction: column;
  align-items: center;
  gap: 39px;
  padding-bottom: 21px;
}
.rail-line { width: 42px; height: 1px; background: #c8c8c8; margin-bottom: -14px; }

/* windows taskbar */
.taskbar {
  height: 72px;
  flex: none;
  display: flex;
  align-items: flex-start;
  background: linear-gradient(90deg, #efefef 310px, #cdeaf6 420px, #d3ecf6 520px, #efefef 690px, #efefef 1380px, #c9f2de 1500px, #d5f3e4 1700px, #efefef 1860px);
  border-top: 1px solid #dcdcdc;
  font-family: "Noto Sans", sans-serif;
}
.weather {
  width: 308px;
  height: 71px;
  display: flex;
  align-items: center;
  padding-left: 31px;
  gap: 10px;
  font-size: 17px;
  line-height: 25px;
}
.weather-sub { color: #555; }
.winlogo { margin-top: 19px; }
.tb-search {
  width: 146px;
  height: 46px;
  margin: 13px 0 0 23px;
  padding-left: 30px;
  border-radius: 23px;
  background: #f2f9fd;
  display: flex;
  align-items: center;
  gap: 8px;
  font-size: 17.500px;
  box-shadow: 0 1px 2px rgba(0, 0, 0, .08);
}
.tb-icons { display: flex; margin-left: 6px; }
.tb-icon {
  width: 66px;
  height: 71px;
  padding-top: 18px;
  display: flex;
  flex-direction: column;
  align-items: center;
  position: relative;
}
.tb-icon i {
  margin-top: auto;
  margin-bottom: 4px;
  width: 6px;
  height: 6px;
  border-radius: 50%;
  background: #8a8a8a;
}
.tb-active {
  background: #f4f8fb;
  width: 54px;
  margin: 7px 6px 0;
  height: 60px;
  padding-top: 11px;
  border-radius: 5px;
  box-shadow: 0 0 1px rgba(0, 0, 0, .3);
}
.tb-active i { width: 24px; height: 6px; border-radius: 3px; background: #0a6fd0; margin-bottom: 1px; }
.badge {
  position: absolute;
  top: 7px;
  left: 36px;
  width: 22px;
  height: 22px;
  border-radius: 50%;
  background: #0a66c8;
  color: #fff;
  font-size: 14px;
  font-weight: 700;
  text-align: center;
  line-height: 22px;
}
.app-letter { font: bold 13px "Liberation Sans", sans-serif; fill: #fff; text-anchor: middle; }
.tb-sep { width: 1px; height: 36px; margin-top: 18px; background: #7a7a7a; }
.rec {
  position: absolute;
  top: 6px;
  left: 36px;
  width: 21px;
  height: 21px;
  border-radius: 50%;
  background: #fff;
  border: 5px solid #e8434f;
}
.tray {
  height: 71px;
  margin-left: 16px;
  display: flex;
  align-items: center;
}
.tray-cell {
  width: 36px;
  display: flex;
  justify-content: center;
}
.tray-mic {
  width: 47px;
  height: 59px;
  margin: 0 6px 0 1px;
  background: #0f62b8;
  border-radius: 4px;
  display: flex;
  align-items: center;
  justify-content: center;
}
.clock {
  margin: 12px 0 0 20px;
  font-size: 17.500px;
  line-height: 24px;
  white-space: nowrap;
}
```
